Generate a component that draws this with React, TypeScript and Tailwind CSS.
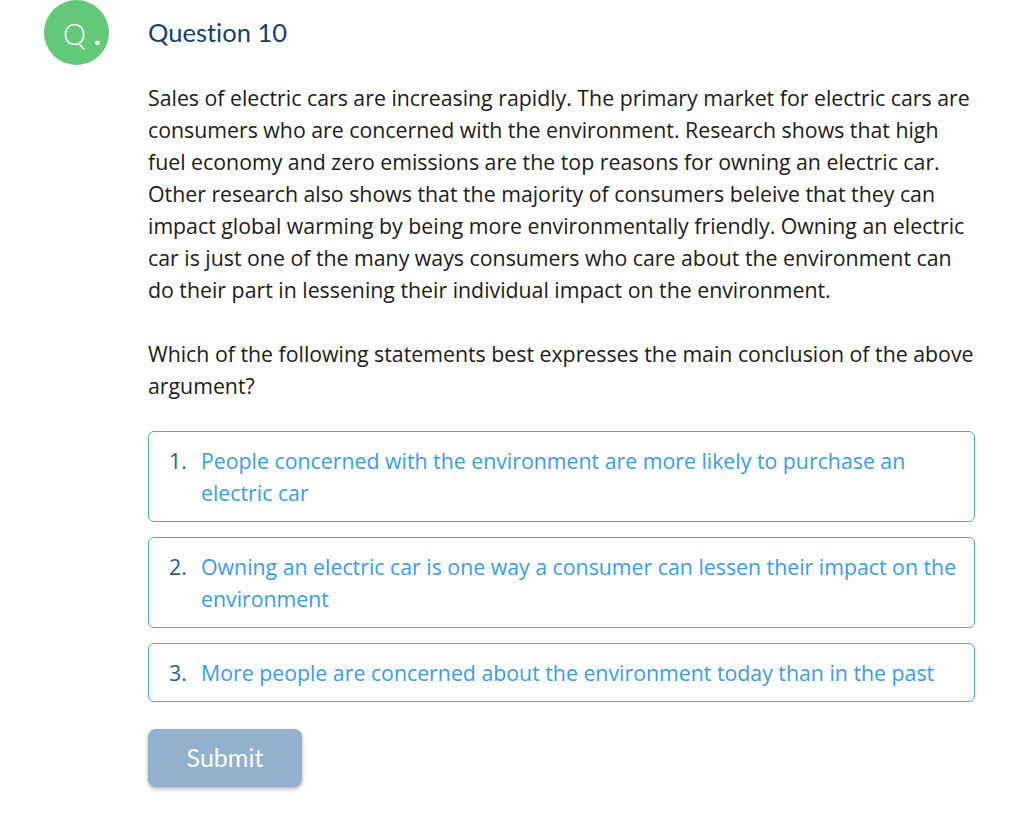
import React from "react";

const options: React.ReactNode[] = [
  <>People concerned with the environment are more likely to purchase an<br />electric car</>,
  <>Owning an electric car is one way a consumer can lessen their impact on the<br />environment</>,
  <>More people are concerned about the environment today than in the past</>,
];

const para = [
  "Sales of electric cars are increasing rapidly. The primary market for electric cars are",
  "consumers who are concerned with the environment. Research shows that high",
  "fuel economy and zero emissions are the top reasons for owning an electric car.",
  "Other research also shows that the majority of consumers beleive that they can",
  "impact global warming by being more environmentally friendly. Owning an electric",
  "car is just one of the many ways consumers who care about the environment can",
  "do their part in lessening their individual impact on the environment.",
];

export default function App() {
  return (
    <div className="min-h-[822px] w-[1024px] bg-white" style={{ fontFamily: "'Open Sans', sans-serif" }}>
      <div className="flex pl-[44px]">
        <div className="flex h-[65px] w-[65px] shrink-0 items-center rounded-full bg-[#63c979] pl-[19px] pt-[2px]">
          <span className="text-[29px] font-light leading-none text-white" style={{ fontFamily: "Lato, sans-serif" }}>
            Q
          </span>
          <span className="ml-[8px] text-[29px] font-bold leading-none text-white" style={{ fontFamily: "Lato, sans-serif" }}>
            .
          </span>
        </div>
        <div
          className="ml-[39px] mt-[16px] text-[25.5px] leading-[32px] text-[#1c3d6b] [font-variant-ligatures:none]"
          style={{ fontFamily: "Lato, sans-serif" }}
        >
          Question 10
        </div>
      </div>
      <div className="ml-[148px] w-[860px]">
        <p className="mt-[17px] whitespace-nowrap text-[21.3px] leading-[32px] text-[#1b1b1b]">
          {para.map((l, i) => (
            <React.Fragment key={i}>
              {l}
              {i < para.length - 1 && <br />}
            </React.Fragment>
          ))}
        </p>
        <p className="mt-[32px] whitespace-nowrap text-[21.3px] leading-[32px] text-[#1b1b1b]">
          Which of the following statements best expresses the main conclusion of the above
          <br />
          argument?
        </p>
        <div className="mt-[29px] flex w-[827px] flex-col gap-[15px]">
          {options.map((o, i) => (
            <div
              key={i}
              className="flex rounded-[6px] border border-[#4ba3f3] pb-[12px] pl-[20px] pr-[4px] pt-[13px] text-[21.3px] leading-[32px]"
            >
              <span className="w-[32px] shrink-0 text-[#2d5b8a]">{i + 1}.</span>
              <span className="whitespace-nowrap text-[#3b9bf0]">{o}</span>
            </div>
          ))}
        </div>
        <button
          className="mt-[27px] h-[58px] w-[154px] rounded-[8px] bg-[#93b0cd] text-[25px] text-white shadow-[0_2px_4px_rgba(0,0,0,0.3)]"
          style={{ fontFamily: "Lato, sans-serif" }}
        >
          Submit
        </button>
      </div>
    </div>
  );
}
